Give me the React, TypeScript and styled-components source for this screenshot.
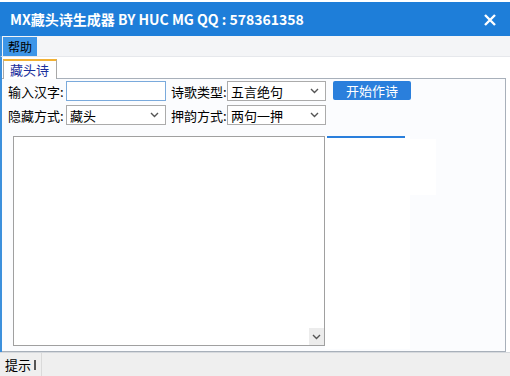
import { createGlobalStyle, styled } from "styled-components";

const GlobalStyle = createGlobalStyle`
  html, body {
    margin: 0;
    padding: 0;
    background: #fff;
  }
  body {
    font-family: "Noto Sans CJK SC", "Noto Sans", sans-serif;
  }
`;

function Chevron() {
  return (
    <svg width="9" height="6" viewBox="0 0 9 6">
      <path d="M1 1 L4.5 4.5 L8 1" fill="none" stroke="#555" strokeWidth="1.4" />
    </svg>
  );
}

function Field({
  label,
  value,
  width,
  labelWidth,
}: {
  label: string;
  value: string;
  width: number;
  labelWidth: number;
}) {
  return (
    <FieldWrap>
      <Label $w={labelWidth}>{label}</Label>
      <Select $w={width}>
        <span>{value}</span>
        <Chevron />
      </Select>
    </FieldWrap>
  );
}

export default function App() {
  return (
    <Window>
      <GlobalStyle />
      <TitleBar>
        <Title>MX藏头诗生成器 BY HUC MG QQ : 578361358</Title>
        <svg width="12" height="12" viewBox="0 0 12 12">
          <path d="M1 1 L11 11 M11 1 L1 11" stroke="#fff" strokeWidth="2.4" />
        </svg>
      </TitleBar>
      <MenuBar>
        <MenuItem $active>帮助</MenuItem>
      </MenuBar>
      <Body>
        <TabStrip>
          <Tab>藏头诗</Tab>
        </TabStrip>
        <Panel>
          <Row>
            <FieldWrap>
              <Label $w={58}>输入汉字:</Label>
              <TextInput />
            </FieldWrap>
            <Field label="诗歌类型:" value="五言绝句" width={99} labelWidth={56} />
            <StartButton>开始作诗</StartButton>
          </Row>
          <Row>
            <Field label="隐藏方式:" value="藏头" width={100} labelWidth={58} />
            <Field label="押韵方式:" value="两句一押" width={99} labelWidth={56} />
          </Row>
          <Output>
            <TextArea>
              <ScrollArrow>
                <Chevron />
              </ScrollArrow>
            </TextArea>
            <Ghost>
              <GhostBar />
            </Ghost>
            <GhostTail />
          </Output>
        </Panel>
      </Body>
      <StatusBar>
        <StatusCell>
          提示<Caret />
        </StatusCell>
      </StatusBar>
    </Window>
  );
}

const Window = styled.div`
  width: 510px;
  height: 376px;
  display: flex;
  flex-direction: column;
  overflow: hidden;
  background: #fff;
`;

const TitleBar = styled.div`
  margin-top: 2px;
  height: 34px;
  background: #1e7ed9;
  display: flex;
  align-items: center;
  justify-content: space-between;
  padding: 0 14px 0 10px;
  svg {
    margin-top: 1px;
  }
`;

const Title = styled.div`
  color: #fff;
  font-family: "Noto Sans CJK SC", "Open Sans", sans-serif;
  font-weight: 700;
  font-size: 14px;
`;

const MenuBar = styled.div`
  height: 21px;
  background: #f4f5f7;
  border-left: 2px solid #3b8fdc;
  border-bottom: 1px solid #e6e8ec;
  display: flex;
  align-items: stretch;
  padding: 1px 0 0 1px;
  box-sizing: border-box;
`;

const MenuItem = styled.div<{ $active?: boolean }>`
  padding: 0 5px;
  font-size: 12px;
  line-height: 19px;
  color: #000;
  background: ${(p) => (p.$active ? "#3e96e8" : "transparent")};
`;

const Body = styled.div`
  flex: 1;
  border-left: 2px solid #3b8fdc;
  display: flex;
  flex-direction: column;
  padding-right: 4px;
  background: #fff;
`;

const TabStrip = styled.div`
  height: 21px;
  display: flex;
  align-items: flex-end;
  padding-left: 1px;
`;

const Tab = styled.div`
  height: 20px;
  width: 54px;
  box-sizing: border-box;
  border: 1px solid #a8a8a8;
  border-top: 2px solid #f2b134;
  border-bottom: none;
  background: #fff;
  color: #1a2e9c;
  font-size: 13px;
  line-height: 17px;
  padding-left: 6px;
  margin-bottom: -1px;
  position: relative;
  z-index: 1;
`;

const Panel = styled.div`
  flex: 1;
  border: 1px solid #a8b0ba;
  border-left: none;
  background: #fbfcfe;
  display: flex;
  flex-direction: column;
  gap: 4px;
  padding: 2px 0 0 6px;
`;

const Row = styled.div`
  display: flex;
  align-items: center;
  gap: 5px;
  height: 20px;
`;

const FieldWrap = styled.div`
  display: flex;
  align-items: center;
`;

const Label = styled.span<{ $w: number }>`
  font-size: 13px;
  color: #000;
  width: ${(p) => p.$w}px;
  white-space: nowrap;
`;

const TextInput = styled.div`
  width: 100px;
  height: 20px;
  box-sizing: border-box;
  border: 1px solid #7aaadc;
  background: #fff;
`;

const Select = styled.div<{ $w: number }>`
  width: ${(p) => p.$w}px;
  height: 20px;
  box-sizing: border-box;
  border: 1px solid #ababab;
  background: #fff;
  display: flex;
  align-items: center;
  justify-content: space-between;
  padding: 0 6px 0 3px;
  font-size: 13px;
  color: #000;
`;

const StartButton = styled.div`
  margin-left: 2px;
  width: 78px;
  height: 19px;
  border-radius: 2px;
  background: #2a7fdc;
  color: #fff;
  font-size: 13px;
  line-height: 19px;
  text-align: center;
  align-self: flex-start;
`;

const Output = styled.div`
  display: flex;
  align-items: flex-start;
  margin: 7px 0 0 5px;
`;

const TextArea = styled.div`
  width: 312px;
  height: 210px;
  box-sizing: border-box;
  border: 1px solid #a0a0a0;
  background: #fff;
  position: relative;
`;

const ScrollArrow = styled.div`
  position: absolute;
  right: 0;
  bottom: 0;
  width: 15px;
  height: 17px;
  background: #ececec;
  display: flex;
  align-items: center;
  justify-content: center;
`;

const Ghost = styled.div`
  width: 85px;
  height: 213px;
  background: #fff;
  padding-left: 2px;
  box-sizing: border-box;
`;

const GhostBar = styled.div`
  width: 78px;
  height: 2px;
  background: #2a7fdc;
`;

const GhostTail = styled.div`
  width: 26px;
  height: 56px;
  margin-top: 3px;
  background: #fff;
`;

const StatusBar = styled.div`
  height: 23px;
  background: #efefef;
  border-top: 1px solid #d6d9dd;
  display: flex;
`;

const StatusCell = styled.div`
  padding-left: 5px;
  width: 36px;
  border-right: 1px solid #dadada;
  font-size: 13px;
  line-height: 22px;
  display: flex;
  align-items: center;
  gap: 3px;
`;

const Caret = styled.span`
  display: inline-block;
  width: 2px;
  height: 10px;
  background: #555;
`;
